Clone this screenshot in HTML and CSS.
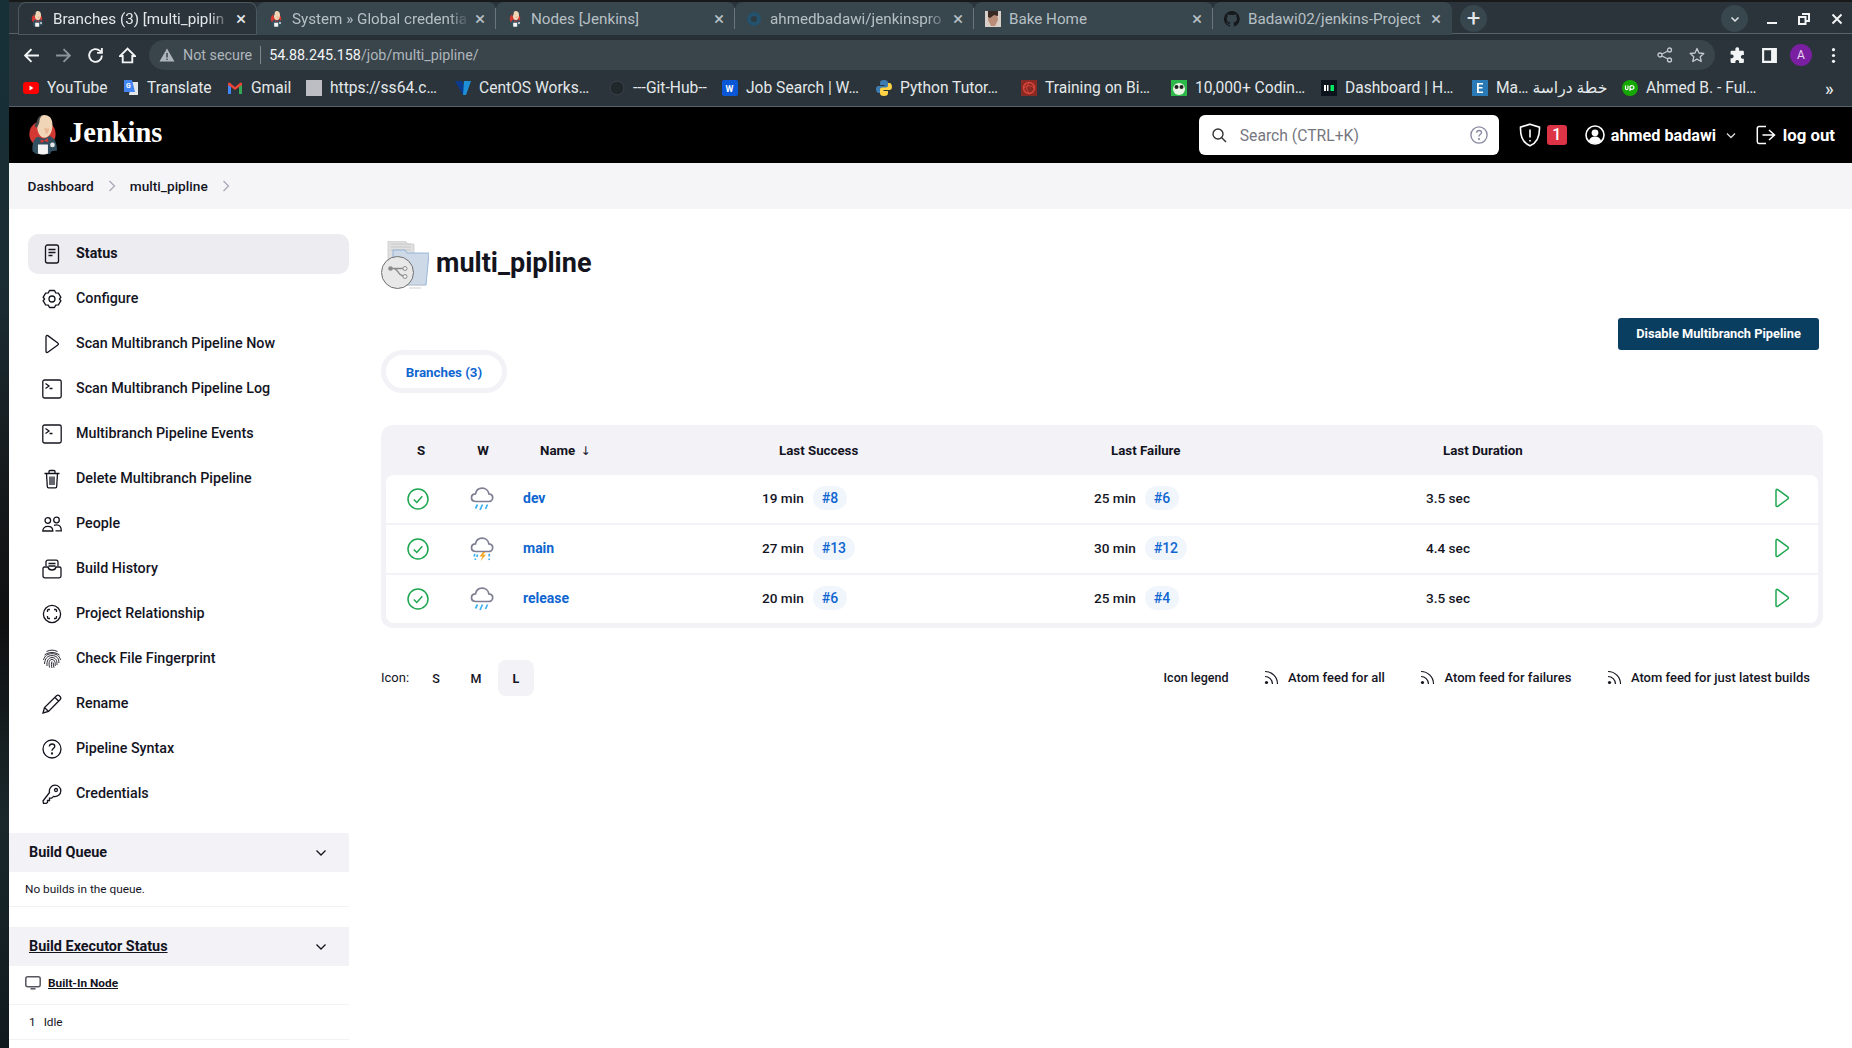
FILE: index.html
```html
<!DOCTYPE html>
<html lang="en">
<head>
<meta charset="utf-8">
<title>Branches (3) [multi_pipline] [Jenkins]</title>
<link rel="stylesheet" href="styles.css">
</head>
<body>
<svg class="sprites" xmlns="http://www.w3.org/2000/svg">
  <symbol id="butler" viewBox="0 0 32 44">
    <circle cx="16" cy="21" r="14.500" fill="#d33833"/>
    <path d="M5 40c-.5-8 1-14 6-16l6 2 7-3c5 2 8 7 8 16l-6 1-2 3H9z" fill="#335061"/>
    <path d="M10 11c0-7 3-11 8-11 5.500 0 9 4 9 11 0 7-3 14-9 14-5 0-8-6-8-14z" fill="#f0d6b7"/>
    <path d="M10 14c-1.500 0-2.500-1-2.500-3 0-1.500.8-2.500 2-2 .5-4 2.500-8 7-9-3 2-4 5-4 8-.5 2-1.500 4-2.500 6z" fill="#49494a"/>
    <path d="M18 14c1.500 1 4 1 5.500.5-.5 3-2 5.500-3 7-1.500-2-2.500-5-2.500-7.500z" fill="#e8b795"/>
    <path d="M14 27l4 1 4-3 .5 5-4.500-1.500L14 31z" fill="#d33833"/>
    <path d="M11 32.500h11v10c-3 1.500-8 1.500-11 0z" fill="#f4f4f4"/>
    <circle cx="27" cy="33" r="2.600" fill="#e8e8e8"/>
  </symbol>
  <symbol id="i-status" viewBox="0 0 20 20"><rect x="3.500" y="1" width="13" height="18" rx="2"/><path d="M6.500 5.500h7M6.500 8.500h7M6.500 11.500h4"/></symbol>
  <symbol id="i-gear" viewBox="0 0 20 20"><path d="M7.500 1.500h5l1.200 2.400 2.700.2 2.500 4.200-1.500 1.700 1.500 1.700-2.500 4.200-2.700.2-1.200 2.400h-5l-1.200-2.400-2.700-.2L1.100 11.700 2.600 10 1.100 8.300l2.500-4.200 2.700-.2z" stroke-linejoin="round"/><circle cx="10" cy="10" r="3"/></symbol>
  <symbol id="i-play" viewBox="0 0 16 20"><path d="M2 2.500c0-1 1-1.400 1.800-.9l10 7.300c.7.500.7 1.600 0 2.100l-10 7.300c-.8.500-1.800.1-1.800-.9z" stroke-linejoin="round"/></symbol>
  <symbol id="i-term" viewBox="0 0 20 20"><rect x=".8" y="1" width="18.400" height="18" rx="1.800"/><path d="M3.500 4.500l3.500 2.500-3.500 2.500M7.500 9.500h3"/></symbol>
  <symbol id="i-trash" viewBox="0 0 20 20"><path d="M2.500 4.500h15M7 4.500V2.500c0-.6.400-1 1-1h4c.6 0 1 .4 1 1v2M4.500 4.500l.8 13c0 .7.600 1.300 1.300 1.300h6.800c.7 0 1.300-.6 1.300-1.300l.8-13M8 7.500v8.500M10 7.500v8.500M12 7.500v8.500"/></symbol>
  <symbol id="i-people" viewBox="0 0 20 20"><circle cx="5.800" cy="6.500" r="2.800"/><circle cx="14.500" cy="6" r="2.800"/><path d="M.8 17c0-2.800 2-4.700 5-4.700s5 1.900 5 4.700zM12 11.300c.8-.3 1.600-.4 2.500-.4 2.800 0 4.800 1.900 4.800 6h-5.800"/></symbol>
  <symbol id="i-history" viewBox="0 0 20 20"><path d="M4 7V3c0-1 .8-1.800 1.800-1.800h8.400c1 0 1.800.8 1.800 1.800v4M6.500 4.500h7M6.500 7h7"/><path d="M1 9.500c0-1 .6-1.500 1.500-1.500h3.500c.4 2 2 3 4 3s3.600-1 4-3h3.500c.9 0 1.500.5 1.500 1.500v7.500c0 1-.8 1.800-1.800 1.800H2.800c-1 0-1.800-.8-1.800-1.800z"/></symbol>
  <symbol id="i-rel" viewBox="0 0 20 20"><circle cx="10" cy="10" r="8.600"/><path d="M5.500 8V6.500c0-.6.400-1 1-1H8M12 5.500h1.500c.6 0 1 .4 1 1V8M14.500 12v1.500c0 .6-.4 1-1 1H12M8 14.500H6.500c-.6 0-1-.4-1-1V12"/></symbol>
  <symbol id="i-finger" viewBox="0 0 20 20"><path d="M4.500 2.500c3.500-1.800 7.500-1.800 11 0M2.500 6c4-3.300 11-3.300 15 0M1.500 11c1-4.500 4.500-6.300 8.500-6.300s7.500 1.800 8.500 6.300M2.500 15c.5-6 3-8.400 7.500-8.400s7 2.400 6.900 7.400M5 17c-.5-5.500 1.500-8.400 5-8.400s5.200 2.400 5 7.400M7.500 18.500c-1-5-.2-8 2.500-8s3.500 3 3.200 6.500M10 19c-.8-2.500-.8-4.500 0-6.500M12 18.700c-.7-1.800-.8-3.500-.7-5"/></symbol>
  <symbol id="i-pencil" viewBox="0 0 20 20"><path d="M1 19l1.500-5.500L14.500 1.800c.8-.7 2-.7 2.800 0l.9.900c.7.800.7 2 0 2.800L6.500 17.500zM2.500 13.500l4 4M13 3.500l3.500 3.500"/></symbol>
  <symbol id="i-help" viewBox="0 0 20 20"><circle cx="10" cy="10" r="9"/><path d="M7.300 7.500c.2-1.600 1.300-2.500 2.800-2.500 1.600 0 2.700 1 2.700 2.300 0 2.200-2.800 2.200-2.800 4.400"/><circle cx="10" cy="14.500" r=".5"/></symbol>
  <symbol id="i-key" viewBox="0 0 20 20"><path d="M7.500 8.500c-.8-4 2-7.300 5.500-7.300 3.300 0 5.800 2.500 5.800 5.700 0 3.500-3.300 6.300-7.300 5.500l-1.800 1.800H7.500V16.500H5.500V18.500l-1.500 1H1.500l-.5-2.500z"/><circle cx="14" cy="6" r="1.500"/></symbol>
  <symbol id="i-check" viewBox="0 0 22 22"><circle cx="11" cy="11" r="10"/><path d="M6.800 11.500l3 3 5.500-6.300"/></symbol>
  <symbol id="i-rain" viewBox="0 0 24 24"><path d="M6 14.500c-2.500 0-4.500-1.500-4.500-3.800 0-2.200 1.700-3.800 4-3.800C6.200 3.500 9 1.200 12.200 1.200c3.500 0 6.200 2.500 6.700 5.700 2.300.2 3.800 1.800 3.800 3.900 0 2.200-2 3.700-4.400 3.700z" stroke="#7e7e92" stroke-width="1.700"/><path d="M7.500 17.500l-2 4M12.500 17.500l-2.500 5.500M17.500 17.500l-2 4.500" stroke="#3cb0f0" stroke-width="1.700"/></symbol>
  <symbol id="i-storm" viewBox="0 0 24 24"><path d="M6 14.500c-2.500 0-4.500-1.500-4.500-3.800 0-2.200 1.700-3.800 4-3.800C6.200 3.500 9 1.200 12.200 1.200c3.500 0 6.200 2.500 6.700 5.700 2.300.2 3.800 1.800 3.800 3.900 0 2.200-2 3.700-4.400 3.700z" stroke="#7e7e92" stroke-width="1.700"/><path d="M13 15l-3.500 4.500h3l-2 4.500 5.500-6.200h-3l2.500-2.800z" fill="#f5a623" stroke="none"/><path d="M4.800 17l-.6 2.500M7.500 17.500l-.6 2.500M19 17l.5 2.500M5.500 21.500l-.3 1.500M19 21.500l.3 1.500" stroke="#3cb0f0" stroke-width="1.700"/></symbol>
  <symbol id="i-rss" viewBox="0 0 16 16"><circle cx="2.500" cy="13.500" r="1.600" fill="currentColor" stroke="none"/><path d="M1 7.500c4 0 7.500 3.300 7.500 7.500M1 2.500c7 0 12.500 5.500 12.500 12.500"/></symbol>
</svg>

<div class="desktop">
  <div class="wallpaper"></div>
  <div class="window">
    <div class="tabstrip">
      <div class="tab tab-active"><svg class="favicon"><use href="#butler"/></svg><span class="tab-label tab-fade">Branches (3) [multi_piplin</span><span class="tab-x">×</span></div>
      <div class="tab"><svg class="favicon"><use href="#butler"/></svg><span class="tab-label tab-fade">System » Global credentia</span><span class="tab-x">×</span></div>
      <div class="tab"><svg class="favicon"><use href="#butler"/></svg><span class="tab-label">Nodes [Jenkins]</span><span class="tab-x">×</span></div>
      <div class="tab"><svg class="favicon" viewBox="0 0 16 16"><circle cx="8" cy="8" r="7" fill="#24526c"/><circle cx="8" cy="8" r="3" fill="#2e3b43"/></svg><span class="tab-label tab-fade">ahmedbadawi/jenkinspro</span><span class="tab-x">×</span></div>
      <div class="tab"><svg class="favicon" viewBox="0 0 16 16"><rect width="16" height="16" fill="#d8d0c8"/><path d="M4 2h8l1 7-3 6H6L3 9z" fill="#b98c78"/><path d="M3 0h10v5l-4-1-4 3-2-1z" fill="#3a2a24"/></svg><span class="tab-label">Bake Home</span><span class="tab-x">×</span></div>
      <div class="tab tab-last"><svg class="favicon" viewBox="0 0 16 16"><path fill="#15191c" d="M8 0a8 8 0 0 0-2.500 15.600c.4.100.5-.2.500-.4v-1.400c-2.200.5-2.700-1-2.700-1-.4-.9-.9-1.200-.9-1.200-.7-.5.100-.5.100-.5.800.100 1.200.8 1.200.8.700 1.200 1.900.9 2.300.7.100-.5.300-.9.500-1.100-1.800-.2-3.700-.9-3.700-4 0-.9.300-1.600.8-2.100-.1-.2-.4-1 .100-2.100 0 0 .7-.2 2.200.8a7.600 7.600 0 0 1 4 0c1.500-1 2.200-.8 2.200-.8.400 1.100.2 1.900.1 2.100.5.600.8 1.300.8 2.100 0 3.100-1.900 3.700-3.700 3.900.3.300.6.800.6 1.500v2.200c0 .2.100.5.600.4A8 8 0 0 0 8 0z"/></svg><span class="tab-label">Badawi02/jenkins-Project</span><span class="tab-x">×</span></div>
      <div class="newtab">+</div>
      <div class="winctl">
        <div class="tabsearch"><svg class="w12" viewBox="0 0 12 12"><path d="M2.500 4.500L6 8l3.500-3.500"/></svg></div>
        <svg class="w-min" viewBox="0 0 12 12"><path d="M1 10h10"/></svg>
        <svg class="w-max" viewBox="0 0 12 12"><path d="M4 1h7v7H8.500M1 4h6.500v7H1z"/></svg>
        <svg class="w-close" viewBox="0 0 12 12"><path d="M1.500 1.500l9 9M10.500 1.500l-9 9"/></svg>
      </div>
    </div>
    <div class="toolbar">
      <div class="tbtn"><svg viewBox="0 0 16 16"><path d="M15 8H2M8 2L2 8l6 6"/></svg></div>
      <div class="tbtn tbtn-dim"><svg viewBox="0 0 16 16"><path d="M1 8h13M8 2l6 6-6 6"/></svg></div>
      <div class="tbtn"><svg viewBox="0 0 16 16"><path d="M14 8a6 6 0 1 1-1.800-4.300L14 5.500M14 1v4.500H9.500"/></svg></div>
      <div class="tbtn"><svg viewBox="0 0 16 16"><path d="M8 1.500L1 8.500h2.500V14.500h9V8.500H15z"/></svg></div>
      <div class="omnibox">
        <svg class="warn" viewBox="0 0 16 16"><path d="M8 1.500L15.500 14.500H.5z"/><path class="warn-mark" d="M8 6v4.500M8 11.700v1.300"/></svg>
        <span class="notsecure">Not secure</span>
        <span class="url"><b>54.88.245.158</b>/job/multi_pipline/</span>
        <svg class="omni-ic share" viewBox="0 0 16 16"><circle cx="12.500" cy="3" r="2"/><circle cx="12.500" cy="13" r="2"/><circle cx="3" cy="8" r="2"/><path d="M5 7l6-3M5 9l6 3"/></svg>
        <svg class="omni-ic star" viewBox="0 0 16 16"><path d="M8 1.500l2 4.500 4.800.5-3.600 3.200 1 4.800L8 12.100l-4.200 2.400 1-4.800L1.200 6.500 6 6z" stroke-linejoin="round"/></svg>
      </div>
      <div class="tools">
        <div class="tbtn"><svg viewBox="0 0 16 16"><path class="solid" d="M6 1.500a1.800 1.800 0 0 1 3.500 0V3.500H13a1 1 0 0 1 1 1V7.500h-1.500a1.800 1.800 0 0 0 0 3.500H14v3a1 1 0 0 1-1 1H9.500v-1.300a1.800 1.800 0 0 0-3.500 0V15H2.500a1 1 0 0 1-1-1V10.500H3a1.800 1.800 0 0 0 0-3.500H1.500V4.500a1 1 0 0 1 1-1H6z"/></svg></div>
        <div class="tbtn"><svg viewBox="0 0 16 16"><path class="panel" d="M2 2h12v12H2z"/><path class="solid" d="M9.500 2H14v12H9.500z"/></svg></div>
        <div class="tbtn"><span class="avatar">A</span></div>
        <div class="tbtn"><svg viewBox="0 0 16 16"><circle class="solid" cx="8" cy="2.500" r="1.500"/><circle class="solid" cx="8" cy="8" r="1.500"/><circle class="solid" cx="8" cy="13.500" r="1.500"/></svg></div>
      </div>
    </div>
    <div class="bookmarks">
      <div class="bm"><svg class="favicon" viewBox="0 0 16 16"><rect y="2" width="16" height="12" rx="3" fill="#f00"/><path d="M6.500 5.500v5l4-2.500z" fill="#fff"/></svg><span>YouTube</span></div>
      <div class="bm"><svg class="favicon" viewBox="0 0 16 16"><path d="M8 2h7v13H6z" fill="#e4e6e8"/><path d="M1 0h8l3 12H1z" fill="#4285f4"/><text class="gt" x="3" y="8">G</text></svg><span>Translate</span></div>
      <div class="bm"><svg class="favicon" viewBox="0 0 16 16"><path d="M1 3v11h3V7l4 3 4-3v7h3V3l-1.500-.5L8 7 2.500 2.500z" fill="#ea4335"/><path d="M1 5v9h3V7z" fill="#4285f4"/><path d="M12 7v7h3V5z" fill="#34a853"/></svg><span>Gmail</span></div>
      <div class="bm"><svg class="favicon" viewBox="0 0 16 16"><rect width="16" height="16" fill="#bdbdc4"/></svg><span>https://ss64.c…</span></div>
      <div class="bm"><svg class="favicon" viewBox="0 0 16 16"><path d="M0 1h7l3 8-2 6z" fill="#0b3a8c"/><path d="M9 1h7l-5 14H8z" fill="#1d8fd8"/></svg><span>CentOS Works…</span></div>
      <div class="bm"><svg class="favicon" viewBox="0 0 16 16"><circle cx="8" cy="8" r="7" fill="#20282c" stroke="#3a454b"/></svg><span>---Git-Hub--</span></div>
      <div class="bm"><svg class="favicon" viewBox="0 0 16 16"><rect width="16" height="16" rx="2" fill="#0a58d8"/><text class="wt" x="3.500" y="12">W</text></svg><span>Job Search | W…</span></div>
      <div class="bm"><svg class="favicon" viewBox="0 0 16 16"><path d="M8 0c-3 0-4 1-4 3v2h4.500v1H2.500C1 6 0 7 0 9s1 4 2.500 4H4v-2.500c0-1.300 1-2 2-2h4c1 0 2-.8 2-2V3c0-2-1-3-4-3z" fill="#3d7cb0"/><path d="M8 16c3 0 4-1 4-3v-2H7.500v-1h6C15 10 16 9 16 7s-1-4-2.500-4H12v2.500c0 1.300-1 2-2 2H6c-1 0-2 .8-2 2V13c0 2 1 3 4 3z" fill="#ffd343"/></svg><span>Python Tutor…</span></div>
      <div class="bm"><svg class="favicon" viewBox="0 0 16 16"><rect width="16" height="16" fill="#8a2a24"/><circle cx="8" cy="8" r="5.500" fill="none" stroke="#d8453a" stroke-width="1.500"/><path d="M3 8c3-3 7-3 10 0M8 3c-3 3-3 7 0 10" fill="none" stroke="#d8453a"/></svg><span>Training on Bi…</span></div>
      <div class="bm"><svg class="favicon" viewBox="0 0 16 16"><rect width="16" height="16" fill="#2db84a"/><circle cx="8" cy="9" r="6" fill="#e8f5e4"/><circle cx="5.500" cy="7" r="2" fill="#222"/><circle cx="10.500" cy="7" r="2" fill="#222"/></svg><span>10,000+ Codin…</span></div>
      <div class="bm"><svg class="favicon" viewBox="0 0 16 16"><rect width="16" height="16" fill="#0e141e"/><rect x="3" y="5" width="2" height="6" fill="#fff"/><rect x="6" y="5" width="1.500" height="6" fill="#fff"/><rect x="9.500" y="5" width="3.500" height="6" fill="#00ea64"/></svg><span>Dashboard | H…</span></div>
      <div class="bm"><svg class="favicon" viewBox="0 0 16 16"><rect width="16" height="16" fill="#2a7ab8"/><path d="M5 3h6v1.500H6.800v2.500H10.500v1.500H6.800v3H11V13H5z" fill="#fff"/></svg><span>Ma… خطة دراسة</span></div>
      <div class="bm"><svg class="favicon" viewBox="0 0 16 16"><circle cx="8" cy="8" r="8" fill="#14a800"/><path d="M3.500 5.500v3c0 1.500 2.500 1.500 2.500 0v-3M8 11V6.500c1.500-1.500 4-.8 4 1s-2.500 2.500-4 1" fill="none" stroke="#fff" stroke-width="1.200"/></svg><span>Ahmed B. - Ful…</span></div>
      <div class="bm-more">»</div>
    </div>

    <header class="jk-header">
      <svg class="jk-logo"><use href="#butler"/></svg>
      <span class="jk-word">Jenkins</span>
      <div class="jk-search">
        <svg class="s-ic" viewBox="0 0 16 16"><circle cx="7" cy="7" r="5"/><path d="M10.800 10.800L15 15"/></svg>
        <span class="s-ph">Search (CTRL+K)</span>
        <svg class="s-help"><use href="#i-help"/></svg>
      </div>
      <svg class="shield" viewBox="0 0 22 24"><path d="M11 1.200l9.500 3c.3 9.500-2 15.500-9.500 18.600C3.500 19.700 1.200 13.700 1.500 4.200z"/><path d="M11 6.500v8M11 17v1.500"/></svg>
      <span class="badge">1</span>
      <svg class="user" viewBox="0 0 20 20"><circle class="u-ring" cx="10" cy="10" r="9"/><circle class="u-fill" cx="10" cy="7.800" r="3.400"/><path class="u-fill" d="M3.800 16c1-3 3.300-4.400 6.200-4.400s5.200 1.400 6.200 4.400c-3.400 3.200-9 3.200-12.400 0z"/></svg>
      <span class="uname">ahmed badawi</span>
      <svg class="u-chev" viewBox="0 0 12 12"><path d="M2 4.500L6 8.500l4-4"/></svg>
      <svg class="logout" viewBox="0 0 20 20"><path d="M10 1.500H3c-1 0-1.700.7-1.700 1.700v13.600c0 1 .7 1.700 1.700 1.700h7M6.500 10H18M13 5l5.500 5-5.500 5"/></svg>
      <span class="logout-t">log out</span>
    </header>

    <nav class="crumbs">
      <span>Dashboard</span>
      <svg class="crumb-sep" viewBox="0 0 8 12"><path d="M1.500 1l5 5-5 5"/></svg>
      <span>multi_pipline</span>
      <svg class="crumb-sep" viewBox="0 0 8 12"><path d="M1.500 1l5 5-5 5"/></svg>
    </nav>

    <div class="page">
      <aside class="side">
        <ul class="tasks">
          <li class="task task-on"><svg class="ic"><use href="#i-status"/></svg>Status</li>
          <li class="task"><svg class="ic"><use href="#i-gear"/></svg>Configure</li>
          <li class="task"><svg class="ic ic-play"><use href="#i-play"/></svg>Scan Multibranch Pipeline Now</li>
          <li class="task"><svg class="ic"><use href="#i-term"/></svg>Scan Multibranch Pipeline Log</li>
          <li class="task"><svg class="ic"><use href="#i-term"/></svg>Multibranch Pipeline Events</li>
          <li class="task"><svg class="ic"><use href="#i-trash"/></svg>Delete Multibranch Pipeline</li>
          <li class="task"><svg class="ic"><use href="#i-people"/></svg>People</li>
          <li class="task"><svg class="ic"><use href="#i-history"/></svg>Build History</li>
          <li class="task"><svg class="ic"><use href="#i-rel"/></svg>Project Relationship</li>
          <li class="task"><svg class="ic ic-thin"><use href="#i-finger"/></svg>Check File Fingerprint</li>
          <li class="task"><svg class="ic"><use href="#i-pencil"/></svg>Rename</li>
          <li class="task"><svg class="ic"><use href="#i-help"/></svg>Pipeline Syntax</li>
          <li class="task"><svg class="ic"><use href="#i-key"/></svg>Credentials</li>
        </ul>
        <section class="pane pane-queue">
          <div class="pane-h"><span>Build Queue</span><svg class="chev" viewBox="0 0 12 12"><path d="M1.500 3.500L6 8l4.500-4.500"/></svg></div>
          <div class="pane-row pane-note">No builds in the queue.</div>
        </section>
        <section class="pane pane-exec">
          <div class="pane-h"><span class="ul">Build Executor Status</span><svg class="chev" viewBox="0 0 12 12"><path d="M1.500 3.500L6 8l4.500-4.500"/></svg></div>
          <div class="pane-row pane-node"><svg class="monitor" viewBox="0 0 16 14"><rect x=".8" y=".8" width="14.400" height="10" rx="2"/><path d="M5.500 12.800h5"/></svg><span class="ul">Built-In Node</span></div>
          <div class="pane-row pane-idle"><span>1</span><span>Idle</span></div>
        </section>
      </aside>

      <main class="main">
        <div class="title-row">
          <svg class="folder" viewBox="0 0 48 48">
            <path d="M7 0h17l3 3h6v22H7z" fill="#e0e0e0" stroke="#c0c0c0" stroke-width=".6"/>
            <path d="M10 3h20M10 6h20M10 9h20" stroke="#c8c8c8"/>
            <path d="M12 9h12l2 3h22l-3 32H12z" fill="#cdd9e6" stroke="#8fb0d8" stroke-width=".9"/>
            <path d="M28 44h16M28 47h12" stroke="#cfcfcf"/>
            <circle cx="16.500" cy="31.500" r="16" fill="#e8e8e8" stroke="#6f6f6f"/>
            <path d="M9 27.500h13M13 27.500c4 0 3 6 9 7.500" fill="none" stroke="#8a8a8a" stroke-width="1.300"/>
            <circle cx="9.500" cy="27.500" r="2.300" fill="#8a8a8a"/><circle cx="24" cy="27.500" r="2" fill="#f2f2f2" stroke="#8a8a8a"/><circle cx="24" cy="35.500" r="2" fill="#f2f2f2" stroke="#8a8a8a"/>
          </svg>
          <h1 class="title">multi_pipline</h1>
        </div>
        <div class="actions"><button class="btn-disable">Disable Multibranch Pipeline</button></div>
        <div class="view-tabs"><a class="view-tab">Branches (3)</a></div>

        <div class="table">
          <div class="t-head">
            <div class="th th-s">S</div>
            <div class="th th-w">W</div>
            <div class="th th-l">Name <span class="arrow">↓</span></div>
            <div class="th th-l">Last Success</div>
            <div class="th th-l">Last Failure</div>
            <div class="th th-l">Last Duration</div>
            <div></div>
          </div>
          <div class="t-row t-first">
            <div class="td-c"><svg class="ok"><use href="#i-check"/></svg></div>
            <div class="td-c"><svg class="wx"><use href="#i-rain"/></svg></div>
            <div class="td"><a class="job">dev</a></div>
            <div class="td">19 min<a class="pill">#8</a></div>
            <div class="td">25 min<a class="pill">#6</a></div>
            <div class="td">3.5 sec</div>
            <div class="td-c"><svg class="run"><use href="#i-play"/></svg></div>
          </div>
          <div class="t-row">
            <div class="td-c"><svg class="ok"><use href="#i-check"/></svg></div>
            <div class="td-c"><svg class="wx"><use href="#i-storm"/></svg></div>
            <div class="td"><a class="job">main</a></div>
            <div class="td">27 min<a class="pill">#13</a></div>
            <div class="td">30 min<a class="pill">#12</a></div>
            <div class="td">4.4 sec</div>
            <div class="td-c"><svg class="run"><use href="#i-play"/></svg></div>
          </div>
          <div class="t-row t-last">
            <div class="td-c"><svg class="ok"><use href="#i-check"/></svg></div>
            <div class="td-c"><svg class="wx"><use href="#i-rain"/></svg></div>
            <div class="td"><a class="job">release</a></div>
            <div class="td">20 min<a class="pill">#6</a></div>
            <div class="td">25 min<a class="pill">#4</a></div>
            <div class="td">3.5 sec</div>
            <div class="td-c"><svg class="run"><use href="#i-play"/></svg></div>
          </div>
        </div>

        <div class="foot">
          <span class="foot-label">Icon:</span>
          <span class="size">S</span><span class="size">M</span><span class="size size-on">L</span>
          <div class="feeds">
            <span class="feed feed-legend">Icon legend</span>
            <span class="feed"><svg class="rss"><use href="#i-rss"/></svg>Atom feed for all</span>
            <span class="feed"><svg class="rss"><use href="#i-rss"/></svg>Atom feed for failures</span>
            <span class="feed"><svg class="rss"><use href="#i-rss"/></svg>Atom feed for just latest builds</span>
          </div>
        </div>
      </main>
    </div>
  </div>
</div>
</body>
</html>
```

FILE: styles.css
```css
* { box-sizing: border-box; }
html, body { margin: 0; height: 100%; overflow: hidden; }
body { font-family: Roboto, "Noto Sans", "DejaVu Sans", sans-serif; font-size: 14px; color: #14141f; background: #fff; }
.sprites { display: none; }
ul { list-style: none; margin: 0; padding: 0; }
h1 { margin: 0; }

.desktop { display: flex; height: 1048px; }
.wallpaper { width: 9px; flex: none; background: linear-gradient(#173038 0, #1a2c32 300px, #161a1c 480px, #0f0f10 620px, #1a282b 820px, #101a1e 100%); }
.window { flex: 1; min-width: 0; display: flex; flex-direction: column; }

/* browser chrome */
.tabstrip { height: 40px; flex: none; display: flex; align-items: flex-start; padding: 2px 0 0 9px; background: linear-gradient(#2a343a 0 33px, #56636a 33px 34px, #263036 34px); box-shadow: inset 0 2px 0 #17191a; color: #b7c0c5; }
.tab { width: 239px; height: 33px; flex: none; display: flex; align-items: center; padding: 0 7px 0 11px; background: #38464e; border-radius: 8px 8px 0 0; position: relative; font-size: 15.200px; }
.tab::after { content: ""; position: absolute; right: 0; top: 6px; height: 21px; width: 1px; background: #6a767c; }
.tab-last::after { display: none; }
.tab-active { background: #2a343a; box-shadow: inset 0 0 0 1px #4c585f; color: #e4e8ea; }
.tab-active::after { display: none; }
.favicon { width: 16px; height: 16px; flex: none; }
.tab-label { margin-left: 8px; width: 178px; flex: none; white-space: nowrap; overflow: hidden; }
.tab-fade { -webkit-mask-image: linear-gradient(90deg, #000 88%, transparent); mask-image: linear-gradient(90deg, #000 88%, transparent); }
.tab-x { width: 18px; margin-left: 1px; text-align: center; font-size: 19px; line-height: 1; color: inherit; }
.newtab { width: 27px; height: 27px; margin: 3px 0 0 8px; border-radius: 50%; background: #38464e; color: #e4e8ea; font-size: 24px; line-height: 26px; text-align: center; }
.winctl { margin-left: auto; height: 33px; display: flex; align-items: center; color: #eef1f2; }
.tabsearch { width: 27px; height: 27px; border-radius: 50%; background: #38464e; display: flex; align-items: center; justify-content: center; margin-right: 18px; }
.w12 { width: 12px; height: 12px; fill: none; stroke: #e4e8ea; stroke-width: 1.500; }
.w-min, .w-max, .w-close { width: 12px; height: 12px; fill: none; stroke: #f2f4f5; stroke-width: 2; }
.w-min { margin-right: 20px; }
.w-max { margin-right: 21px; }
.w-close { margin-right: 9px; }

.toolbar { height: 30px; flex: none; display: flex; align-items: center; padding: 0 3px 0 6px; background: #2a343a; color: #eef1f2; }
.tbtn { width: 32px; height: 30px; flex: none; display: flex; align-items: center; justify-content: center; }
.tbtn svg { width: 17px; height: 17px; fill: none; stroke: #f2f4f5; stroke-width: 1.800; }
.tbtn-dim svg { stroke: #8a959b; }
.tbtn .solid { fill: #f2f4f5; stroke: none; }
.tbtn .panel { stroke-width: 2; }
.omnibox { flex: 1; height: 30px; margin: 0 6px; padding: 0 10px; border-radius: 15px; background: #3a454b; display: flex; align-items: center; font-size: 14.300px; }
.warn { width: 16px; height: 16px; fill: #aeb6bb; flex: none; }
.warn-mark { stroke: #3a454b; stroke-width: 1.500; fill: none; }
.notsecure { margin-left: 8px; color: #aeb6bb; padding-right: 8px; border-right: 1px solid #7c868b; line-height: 18px; }
.url { margin-left: 8px; color: #aeb6bb; }
.url b { font-weight: 400; color: #f2f4f5; }
.omni-ic { width: 16px; height: 16px; fill: none; stroke: #c2c9cd; stroke-width: 1.300; flex: none; }
.share { margin-left: auto; }
.star { margin: 0 0 0 16px; }
.tools { display: flex; }
.avatar { width: 22px; height: 22px; border-radius: 50%; background: #7b1fa2; color: #e9d7f0; font-size: 12px; line-height: 22px; text-align: center; }

.bookmarks { height: 37px; flex: none; display: grid; grid-template-columns: 100px 104px 79px 149px 154px 113px 154px 145px 150px 150px 151px 150px 1fr 30px; align-items: center; padding: 0 0 0 14px; background: #2a343a; border-bottom: 1px solid #56636a; color: #e4e8ea; font-size: 15.600px; }
.bm { display: flex; align-items: center; gap: 8px; white-space: nowrap; min-width: 0; }
.bm-more { font-size: 18px; font-weight: 500; padding-left: 3px; }
.gt { font: 700 7px Roboto, sans-serif; fill: #fff; }
.wt { font: 700 9px Roboto, sans-serif; fill: #fff; }

/* jenkins header */
.jk-header { height: 56px; flex: none; background: #000; color: #fff; display: flex; align-items: center; padding: 0 17px 0 19px; }
.jk-logo { width: 29px; height: 40px; flex: none; }
.jk-word { margin: 0 0 4px 12px; font: 700 28.500px "Liberation Serif", serif; }
.jk-search { margin-left: auto; width: 300px; height: 40px; background: #fff; border-radius: 6px; display: flex; align-items: center; padding: 0 11px 0 12px; }
.s-ic { width: 16px; height: 16px; fill: none; stroke: #333; stroke-width: 1.400; flex: none; }
.s-ph { margin-left: 13px; color: #767680; font-size: 15.700px; }
.s-help { margin-left: auto; width: 18px; height: 18px; fill: none; stroke: #8a8aa0; stroke-width: 1.500; }
.shield { margin-left: 20px; width: 22px; height: 24px; fill: none; stroke: #fff; stroke-width: 1.600; flex: none; }
.badge { margin-left: 6px; width: 20px; height: 20px; border-radius: 3px; background: #dd3347; font-size: 16px; font-weight: 500; line-height: 20px; text-align: center; }
.user { margin-left: 18px; width: 20px; height: 20px; flex: none; }
.u-ring { fill: none; stroke: #fff; stroke-width: 1.600; }
.u-fill { fill: #fff; }
.uname { margin-left: 6px; width: 105px; font-size: 16.200px; font-weight: 700; white-space: nowrap; }
.u-chev { margin-left: 9px; width: 12px; height: 12px; fill: none; stroke: #ddd; stroke-width: 1.300; flex: none; }
.logout { margin-left: 19px; width: 20px; height: 20px; fill: none; stroke: #fff; stroke-width: 1.500; flex: none; }
.logout-t { margin-left: 7px; font-size: 16.800px; font-weight: 700; white-space: nowrap; }

.crumbs { height: 46px; flex: none; background: #f5f5f8; display: flex; align-items: center; padding: 0 0 0 18.500px; font-size: 13.700px; font-weight: 500; }
.crumb-sep { width: 8px; height: 12px; margin: 0 14px; fill: none; stroke: #a9a9b8; stroke-width: 1.300; }

/* page */
.page { flex: 1; min-height: 0; display: flex; }
.side { width: 340px; flex: none; padding-top: 25px; }
.tasks { display: flex; flex-direction: column; gap: 5px; padding-left: 19px; }
.task { height: 40px; display: flex; align-items: center; gap: 14px; padding-left: 14px; padding-bottom: 2px; border-radius: 10px; font-size: 14.300px; font-weight: 500; }
.task-on { background: #ececf1; font-weight: 700; }
.ic { width: 20px; height: 20px; flex: none; fill: none; stroke: #14141f; stroke-width: 1.300; margin-top: 2px; }
.ic-thin { stroke-width: .9; }

.pane { display: flex; flex-direction: column; }
.pane-queue { margin-top: 19px; }
.pane-exec { margin-top: 20px; }
.pane-h { height: 39px; background: #f2f2f7; display: flex; align-items: center; justify-content: space-between; padding: 0 22px 1px 20px; font-weight: 700; font-size: 14.400px; }
.chev { width: 12px; height: 12px; fill: none; stroke: #14141f; stroke-width: 1.300; margin-top: 2px; }
.ul { text-decoration: underline; }
.pane-row { border-bottom: 1px solid #f2f2f5; display: flex; align-items: center; font-size: 11.800px; }
.pane-note { height: 35px; padding-left: 16px; }
.pane-node { height: 39px; padding: 0 0 5px 16px; gap: 7px; font-weight: 700; }
.pane-idle { height: 35px; padding-left: 20px; gap: 8px; }
.monitor { width: 16px; height: 14px; fill: none; stroke: #55555f; stroke-width: 1.500; }

.main { flex: 1; min-width: 0; padding: 32px 29px 0 32px; }
.title-row { display: flex; align-items: center; gap: 7px; height: 48px; }
.folder { width: 48px; height: 48px; flex: none; }
.title { font-size: 27px; font-weight: 700; line-height: 1; margin-bottom: 4px; }
.actions { display: flex; justify-content: flex-end; margin-top: 29px; padding-right: 4px; }
.btn-disable { height: 32px; width: 201px; border: 0; border-radius: 3px; background: #0a3e61; color: #fff; font: 700 12.800px Roboto, sans-serif; padding: 0 0 2px; }
.view-tabs { display: flex; }
.view-tab { width: 126px; height: 43px; border: 5px solid #f2f2f7; border-radius: 22px; padding-top: 1px; display: flex; align-items: center; justify-content: center; color: #0f66d0; font-size: 13.300px; font-weight: 700; }

.table { margin-top: 32px; background: #f2f2f7; border-radius: 12px; padding: 0 5px 5px; display: flex; flex-direction: column; gap: 2px; }
.t-head, .t-row { display: grid; grid-template-columns: 64px 66px 239px 332px 332px 329px 70px; align-items: center; }
.t-head { height: 50px; margin-bottom: -2px; font-size: 13.300px; font-weight: 700; }
.th-s { text-align: center; padding-left: 6px; }
.th-w { text-align: center; }
.th-l { padding-left: 24px; }
.arrow { font-weight: 400; font-size: 12px; margin-left: 2px; }
.t-row { height: 48px; background: #fff; font-size: 13.600px; font-weight: 500; }
.t-first { border-radius: 8px 8px 0 0; }
.t-last { border-radius: 0 0 8px 8px; }
.td { padding: 0 0 2px 7px; display: flex; align-items: center; }
.td-c { display: flex; align-items: center; justify-content: center; }
.job { color: #0f66d0; font-weight: 700; font-size: 14px; }
.pill { margin-left: 9px; height: 24px; padding: 0 9px; border-radius: 12px; background: #f1f6fd; color: #0f66d0; line-height: 24px; font-size: 14px; }
.ok { width: 22px; height: 22px; fill: none; stroke: #1ea650; stroke-width: 1.500; margin-bottom: 1px; }
.wx { width: 24px; height: 24px; fill: none; margin-left: -2px; }
.run { width: 16px; height: 20px; fill: none; stroke: #1ea650; stroke-width: 1.500; margin: 0 2px 2px 0; }

.foot { margin-top: 32px; height: 36px; display: flex; align-items: center; font-size: 13px; font-weight: 500; }
.foot-label { width: 37px; font-weight: 400; margin-bottom: 2px; }
.size { width: 36px; height: 36px; margin-right: 4px; border-radius: 8px; display: flex; align-items: center; justify-content: center; font-size: 12.500px; }
.size-on { background: #f2f2f7; font-weight: 700; }
.feeds { margin-left: auto; padding: 0 13px 2px 0; display: flex; align-items: center; gap: 35.500px; }
.feed { display: flex; align-items: center; gap: 8px; }
.feed-legend { font-size: 12.500px; }
.rss { width: 16px; height: 16px; fill: none; stroke: #14141f; stroke-width: 1.200; color: #14141f; }
```
